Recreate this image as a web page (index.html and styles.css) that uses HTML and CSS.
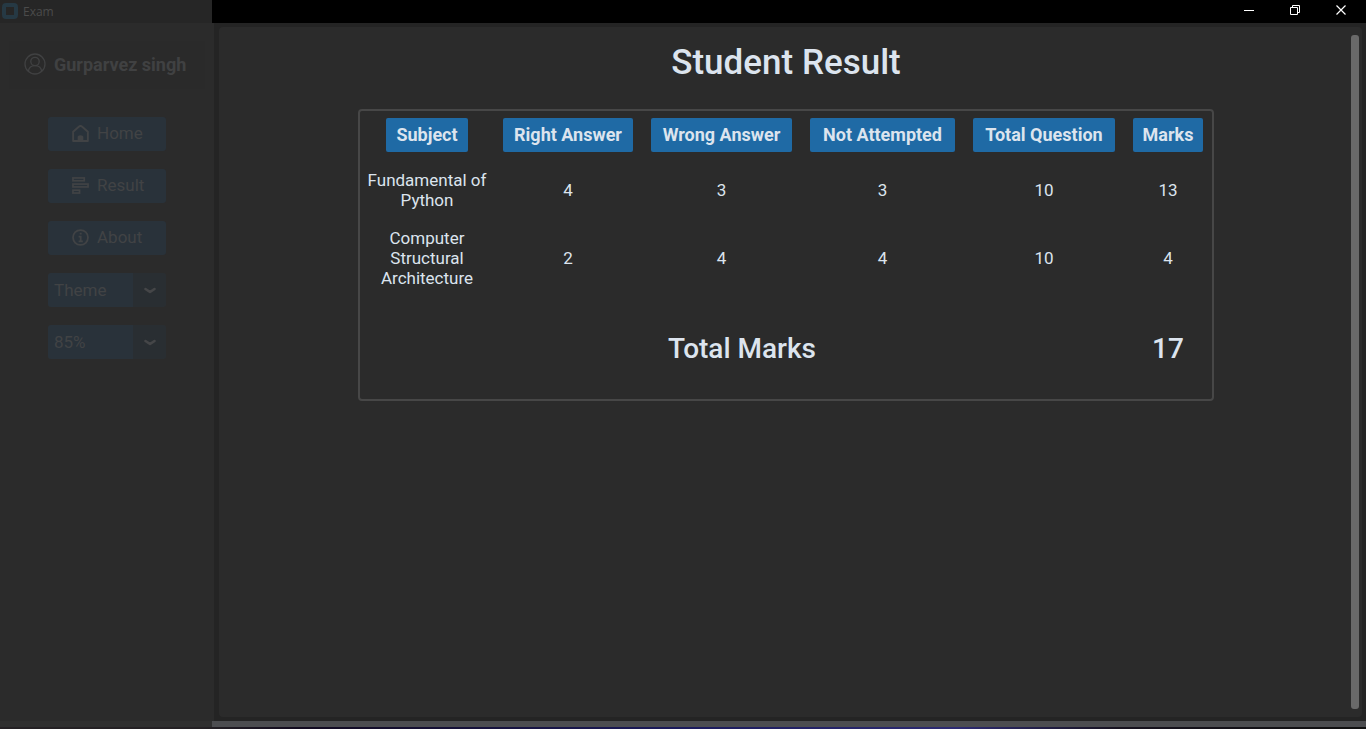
FILE: index.html
```html
<!DOCTYPE html>
<html lang="en">
<head>
<meta charset="utf-8">
<title>Exam</title>
<link rel="stylesheet" href="styles.css">
</head>
<body>
<div class="window">
  <header class="titlebar">
    <div class="titlebar-app">
      <svg class="app-icon" width="16" height="16" viewBox="0 0 16 16" fill="none"><rect x="2" y="2" width="12" height="12" rx="2" stroke="#263944" stroke-width="4"/></svg>
      <span>Exam</span>
    </div>
    <div class="window-controls">
      <button type="button" aria-label="Minimize"><svg width="12" height="12" viewBox="0 0 12 12"><path d="M1 6.500h10" stroke="#fff"/></svg></button>
      <button type="button" aria-label="Restore"><svg width="12" height="12" viewBox="0 0 12 12" fill="none" stroke="#fff"><path d="M1.500 3.500h7v7h-7zM3.500 3V1.500h7v7H9"/></svg></button>
      <button type="button" aria-label="Close"><svg width="12" height="12" viewBox="0 0 12 12"><path d="M1.500 1.500l9 9M10.500 1.500l-9 9" stroke="#fff" stroke-width="1.200"/></svg></button>
    </div>
  </header>

  <div class="body">
    <aside class="sidebar">
      <div class="user">
        <svg width="22" height="22" viewBox="0 0 22 22" fill="none" stroke="currentColor" stroke-width="1.300"><circle cx="11" cy="11" r="10"/><circle cx="11" cy="8.500" r="4.200"/><path d="M4.300 18.300c.6-3.700 3.400-5.600 6.700-5.600s6.100 1.900 6.700 5.600"/></svg>
        <span>Gurparvez singh</span>
      </div>
      <nav class="menu">
        <button type="button" class="menu-button">
          <svg width="17" height="17" viewBox="0 0 18 18"><path d="M1.200 7.200 7.500 1.600q1.500-1.200 3 0l6.300 5.600V17H1.200z" fill="none" stroke="currentColor" stroke-width="2" stroke-linejoin="round"/><path d="M6 17v-4.200q0-2 3-2t3 2V17z" fill="currentColor"/></svg>
          <span>Home</span>
        </button>
        <button type="button" class="menu-button">
          <svg width="17" height="17" viewBox="0 0 18 18" fill="none" stroke="currentColor" stroke-width="1.800"><rect x="1" y="1" width="12" height="3"/><rect x="1" y="7.500" width="16" height="3"/><rect x="1" y="14" width="7" height="3"/></svg>
          <span>Result</span>
        </button>
        <button type="button" class="menu-button">
          <svg width="17" height="17" viewBox="0 0 18 18" fill="none" stroke="currentColor" stroke-width="1.900"><circle cx="9" cy="9" r="7.900"/><path d="M7 8h2.200v5M7 13h4.500M8.200 5h2"/></svg>
          <span>About</span>
        </button>
        <div class="dropdown">
          <select aria-label="Theme"><option>Theme</option><option>Dark</option><option>Light</option></select>
          <svg class="chevron" width="12" height="8" viewBox="0 0 12 8"><path d="M1.500 2 6 5l4.500-3" fill="none" stroke="currentColor" stroke-width="2.600" stroke-linecap="round" stroke-linejoin="round"/></svg>
        </div>
        <div class="dropdown">
          <select aria-label="Scaling"><option>85%</option><option>100%</option></select>
          <svg class="chevron" width="12" height="8" viewBox="0 0 12 8"><path d="M1.500 2 6 5l4.500-3" fill="none" stroke="currentColor" stroke-width="2.600" stroke-linecap="round" stroke-linejoin="round"/></svg>
        </div>
      </nav>
    </aside>

    <main class="panel">
      <div class="content">
        <h1>Student Result</h1>
        <div class="result">
          <table>
            <colgroup><col class="col-subject"><col class="col-right"><col class="col-wrong"><col class="col-skipped"><col class="col-total"><col class="col-marks"></colgroup>
            <thead>
              <tr><th scope="col"><span>Subject</span></th><th scope="col"><span>Right Answer</span></th><th scope="col"><span>Wrong Answer</span></th><th scope="col"><span>Not Attempted</span></th><th scope="col"><span>Total Question</span></th><th scope="col"><span>Marks</span></th></tr>
            </thead>
            <tbody>
              <tr><td>Fundamental of<br>Python</td><td>4</td><td>3</td><td>3</td><td>10</td><td>13</td></tr>
              <tr><td>Computer<br>Structural<br>Architecture</td><td>2</td><td>4</td><td>4</td><td>10</td><td>4</td></tr>
            </tbody>
            <tfoot>
              <tr><td colspan="5">Total Marks</td><td>17</td></tr>
            </tfoot>
          </table>
        </div>
      </div>
      <div class="scrollbar"></div>
    </main>
  </div>

  <div class="bottom-bar"><div class="bottom-left"></div></div>
  <div class="desktop-edge"></div>
</div>
</body>
</html>
```
FILE: styles.css
```css
* {
  box-sizing: border-box;
}

body {
  margin: 0;
  background: #242424;
  color: #dce4ee;
  font-family: Roboto, sans-serif;
  font-size: 17px;
}

button,
select {
  margin: 0;
  border: 0;
  font: inherit;
}

.window {
  display: flex;
  flex-direction: column;
  height: 100vh;
}

.titlebar {
  display: flex;
  justify-content: space-between;
  height: 23px;
  background: #000;
}

.titlebar-app {
  display: flex;
  align-items: center;
  gap: 5px;
  width: 212px;
  padding: 0 0 1px 2px;
  background: #262626;
  color: #4b4b4b;
  font-family: "Open Sans", sans-serif;
  font-size: 12px;
}

.window-controls {
  display: flex;
  padding-right: 2px;
}

.window-controls button {
  display: flex;
  align-items: center;
  justify-content: center;
  width: 46px;
  height: 20px;
  padding: 0;
  background: transparent;
}

.body {
  display: flex;
  flex: 1;
  gap: 5px;
  min-height: 0;
  padding-right: 4px;
}

.sidebar {
  flex: none;
  width: 214px;
  padding: 18px 9px 0;
  background: #2b2b2b;
  color: #404142;
}

.user {
  display: flex;
  align-items: center;
  gap: 8px;
  height: 48px;
  padding: 0 0 2px 15px;
  background: #2a2a2a;
  font-size: 18px;
  font-weight: 700;
  white-space: nowrap;
}

.menu {
  display: flex;
  flex-direction: column;
  gap: 18px;
  width: 118px;
  margin: 28px 0 0 39px;
}

.menu-button {
  display: flex;
  align-items: center;
  gap: 8px;
  height: 34px;
  padding: 0 0 2px 24px;
  border-radius: 3px;
  background: #29323a;
  color: #414345;
}

.dropdown {
  position: relative;
  height: 34px;
}

.dropdown select {
  width: 100%;
  height: 34px;
  padding: 0 40px 0 6px;
  border-radius: 3px;
  appearance: none;
  background: linear-gradient(to right, #29323a 85px, #292e32 85px);
  color: #414345;
}

.chevron {
  position: absolute;
  top: 14px;
  right: 10px;
  pointer-events: none;
  color: #454648;
}

.panel {
  display: flex;
  flex: 1;
  min-width: 0;
  margin: 4px 0;
  padding: 0 3px 0 2px;
  border-radius: 4px;
  background: #2b2b2b;
}

.content {
  flex: 1;
  padding-top: 16px;
}

h1 {
  margin: 0 0 26px;
  font-size: 35px;
  font-weight: 500;
  line-height: 40px;
  text-align: center;
}

.result {
  width: fit-content;
  margin: 0 auto;
  border: 2px solid #474747;
  border-radius: 4px;
}

table {
  width: 852px;
  border-collapse: collapse;
  table-layout: fixed;
  line-height: 20px;
  text-align: center;
}

.col-subject { width: 134px; }
.col-right { width: 148px; }
.col-wrong { width: 159px; }
.col-skipped { width: 163px; }
.col-total { width: 160px; }
.col-marks { width: 88px; }

th {
  height: 50px;
  padding: 0 9px 2px;
}

th span {
  display: block;
  padding: 7px 0;
  border-radius: 2px;
  background: #1f6aa5;
  font-size: 18px;
  font-weight: 700;
  white-space: nowrap;
}

th:first-child span {
  width: 82px;
  margin: 0 auto;
}

td {
  padding: 9px 0;
}

tfoot td {
  height: 102px;
  padding: 10px 0 8px;
  font-size: 28px;
  font-weight: 500;
}

.scrollbar {
  width: 8px;
  margin: 8px 0;
  border-radius: 3px;
  background: #696969;
}

.bottom-bar {
  height: 6px;
  background: #4c4d50;
}

.bottom-left {
  width: 212px;
  height: 100%;
  background: #2f2f2f;
}

.desktop-edge {
  height: 2px;
  background: linear-gradient(to right, #242124 15%, #120b20 22%, #1b1b5c 50%, #2d2b72 70%, #17131f 82%, #111 100%);
}
```
